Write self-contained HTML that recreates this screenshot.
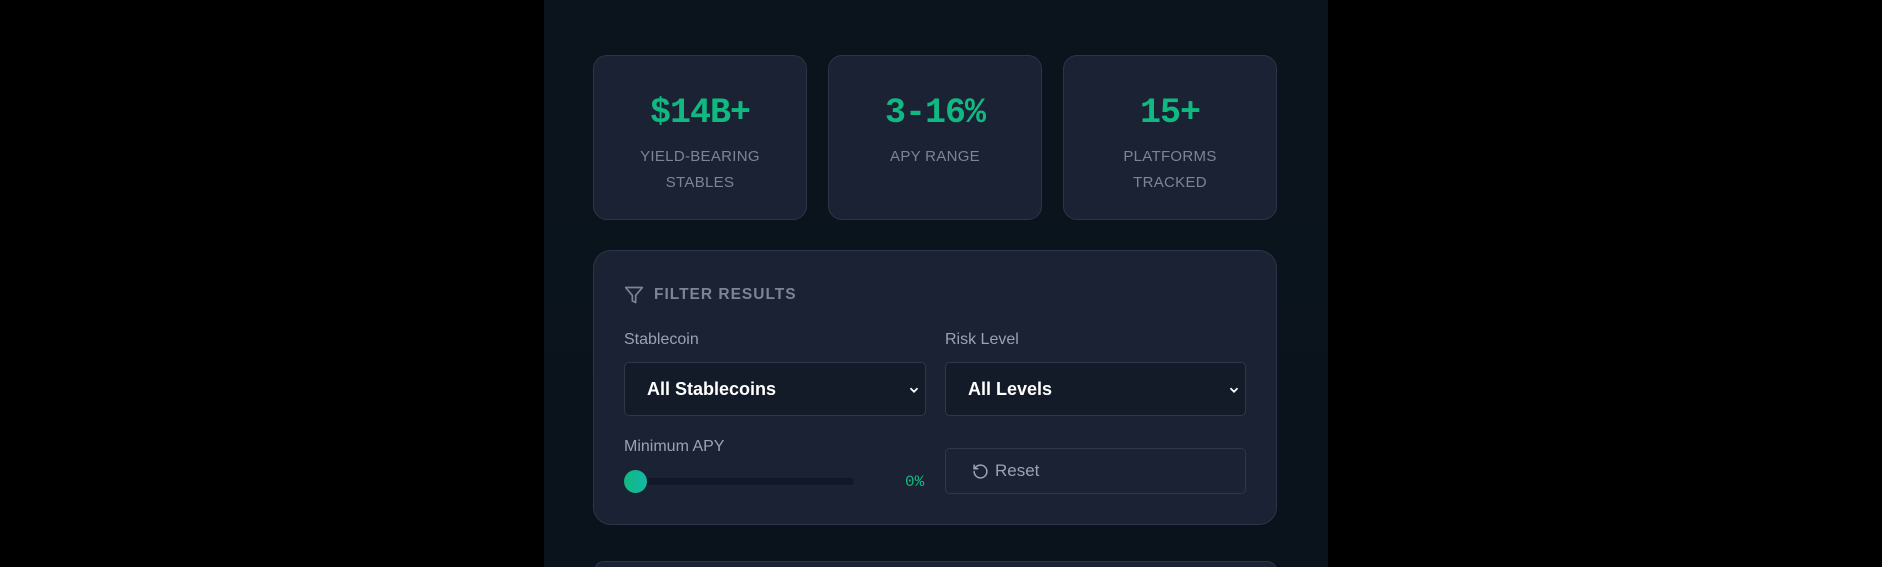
<!DOCTYPE html>
<html><head><style>
*{box-sizing:border-box;margin:0;padding:0}
html,body{width:1882px;height:567px;overflow:hidden}
body{background:#000;font-family:"Liberation Sans",sans-serif;position:relative}
.col{position:absolute;left:544px;top:0;width:784px;height:567px;background:linear-gradient(180deg,#0b141d,#0a131b)}
.card{position:absolute;top:55px;height:165px;width:214px;background:#1b2234;border:1px solid #2b3548;border-radius:14px;text-align:center}
.num{font-family:"Liberation Mono",monospace;font-weight:bold;font-size:35px;color:#10b981;margin-top:37px;letter-spacing:-1px}
.lbl{color:#7b8597;font-size:15px;line-height:26px;margin-top:11px;letter-spacing:.3px}
.panel{position:absolute;left:593px;top:250px;width:684px;height:275px;background:#1b2234;border:1px solid #2b3548;border-radius:18px}
.abs{position:absolute}
.title{left:30px;top:34px;color:#7b8597;font-weight:bold;font-size:15.5px;letter-spacing:1px;display:flex;align-items:center;gap:10px}
.fl{color:#9aa3b2;font-size:16px}
.sel{width:302px;height:54px;background:#131a28;border:1px solid #2e384a;border-radius:5px;color:#fff;font-weight:bold;font-size:18px;padding:16px 0 0 22px}
.chev{position:absolute;right:4px;top:20px}
.bot{position:absolute;left:594px;top:561px;width:683px;height:20px;background:#1b2234;border:1px solid #2b3548;border-radius:14px}
</style></head><body>
<div class="col"></div>
<div class="card" style="left:593px"><div class="num">$14B+</div><div class="lbl">YIELD-BEARING<br>STABLES</div></div>
<div class="card" style="left:828px"><div class="num">3-16%</div><div class="lbl">APY RANGE</div></div>
<div class="card" style="left:1063px"><div class="num">15+</div><div class="lbl">PLATFORMS<br>TRACKED</div></div>
<div class="panel">
 <div class="abs title"><svg width="20" height="20" viewBox="0 0 24 24" fill="none" stroke="#7b8597" stroke-width="2" stroke-linejoin="round"><path d="M22 3H2l8 9.5V19l4 2v-8.5z"/></svg>FILTER RESULTS</div>
 <div class="abs fl" style="left:30px;top:80px">Stablecoin</div>
 <div class="abs fl" style="left:351px;top:80px">Risk Level</div>
 <div class="abs sel" style="left:30px;top:111px">All Stablecoins<svg class="chev" width="14" height="14" viewBox="0 0 24 24" fill="none" stroke="#fff" stroke-width="3"><path d="M6 9l6 6 6-6"/></svg></div>
 <div class="abs sel" style="left:351px;top:111px;width:301px">All Levels<svg class="chev" width="14" height="14" viewBox="0 0 24 24" fill="none" stroke="#fff" stroke-width="3"><path d="M6 9l6 6 6-6"/></svg></div>
 <div class="abs fl" style="left:30px;top:187px">Minimum APY</div>
 <div class="abs" style="left:30px;top:227px;width:230px;height:7px;background:#111827;border-radius:4px"></div>
 <div class="abs" style="left:30px;top:219px;width:23px;height:23px;border-radius:50%;background:linear-gradient(90deg,#10b981,#14b8a6)"></div>
 <div class="abs" style="left:311px;top:222px;color:#10b981;font-family:'Liberation Mono',monospace;font-size:16px">0%</div>
 <div class="abs" style="left:351px;top:197px;width:301px;height:46px;border:1px solid #2e384a;border-radius:5px;color:#9aa3b2;font-size:17px;padding:12px 0 0 26px;display:flex;gap:6px">
 <svg width="17" height="17" viewBox="0 0 24 24" fill="none" stroke="#9aa3b2" stroke-width="2.2" stroke-linecap="round" style="margin-top:2px"><path d="M3 12a9 9 0 1 0 9-9 9.75 9.75 0 0 0-6.74 2.74L3 8"/><path d="M3 3v5h5"/></svg>Reset</div>
</div>
<div class="bot"></div>
</body></html>
